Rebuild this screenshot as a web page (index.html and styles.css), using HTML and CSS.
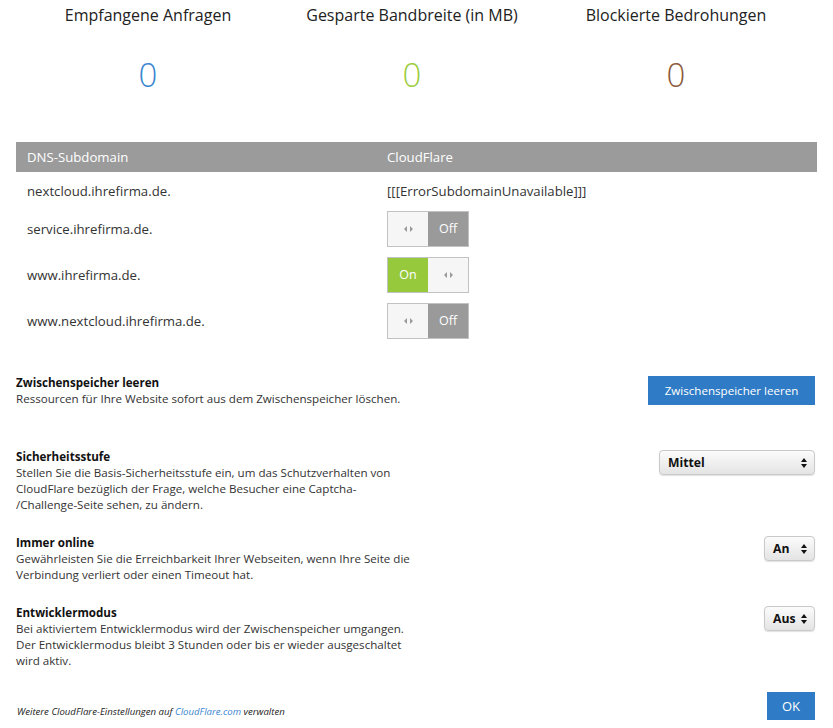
FILE: index.html
```html
<!DOCTYPE html>
<html>
  <head>
  <meta charset="utf-8">
  <title>CloudFlare</title>
  <link rel="stylesheet" href="styles.css">
  </head>
  <body>
    <div class="stats">
      <div class="stat">
        <div class="stat_titel">Empfangene Anfragen</div>
        <div class="stat_wert blau">0</div>
      </div>
      <div class="stat">
        <div class="stat_titel">Gesparte Bandbreite (in MB)</div>
        <div class="stat_wert gruen">0</div>
      </div>
      <div class="stat">
        <div class="stat_titel">Blockierte Bedrohungen</div>
        <div class="stat_wert braun">0</div>
      </div>
    </div>

    <table class="dns">
      <thead>
        <tr><th class="spalte1">DNS-Subdomain</th><th>CloudFlare</th></tr>
      </thead>
      <tbody>
        <tr class="erste">
          <td>nextcloud.ihrefirma.de.</td>
          <td>[[[ErrorSubdomainUnavailable]]]</td>
        </tr>
        <tr>
          <td>service.ihrefirma.de.</td>
          <td>
            <div class="schalter">
              <span class="griff"><svg width="9" height="6" viewBox="0 0 9 6"><path d="M3 0 L0 3 L3 6 Z M6 0 L9 3 L6 6 Z" fill="#9a9a9a"/></svg></span>
              <span class="aus">Off</span>
            </div>
          </td>
        </tr>
        <tr>
          <td>www.ihrefirma.de.</td>
          <td>
            <div class="schalter">
              <span class="an">On</span>
              <span class="griff"><svg width="9" height="6" viewBox="0 0 9 6"><path d="M3 0 L0 3 L3 6 Z M6 0 L9 3 L6 6 Z" fill="#9a9a9a"/></svg></span>
            </div>
          </td>
        </tr>
        <tr>
          <td>www.nextcloud.ihrefirma.de.</td>
          <td>
            <div class="schalter">
              <span class="griff"><svg width="9" height="6" viewBox="0 0 9 6"><path d="M3 0 L0 3 L3 6 Z M6 0 L9 3 L6 6 Z" fill="#9a9a9a"/></svg></span>
              <span class="aus">Off</span>
            </div>
          </td>
        </tr>
      </tbody>
    </table>

    <div class="einstellung" id="cache">
      <div class="text">
        <h3>Zwischenspeicher leeren</h3>
        <p>Ressourcen für Ihre Website sofort aus dem Zwischenspeicher löschen.</p>
      </div>
      <button class="knopf breit">Zwischenspeicher leeren</button>
    </div>

    <div class="einstellung">
      <div class="text">
        <h3>Sicherheitsstufe</h3>
        <p>Stellen Sie die Basis-Sicherheitsstufe ein, um das Schutzverhalten von CloudFlare bezüglich der Frage, welche Besucher eine Captcha-<br>/Challenge-Seite sehen, zu ändern.</p>
      </div>
      <div class="auswahl lang">
        <span>Mittel</span>
        <svg width="6" height="10" viewBox="0 0 6 10"><path d="M3 0 L6 4 L0 4 Z M0 6 L6 6 L3 10 Z" fill="#111"/></svg>
      </div>
    </div>

    <div class="einstellung">
      <div class="text">
        <h3>Immer online</h3>
        <p>Gewährleisten Sie die Erreichbarkeit Ihrer Webseiten, wenn Ihre Seite die Verbindung verliert oder einen Timeout hat.</p>
      </div>
      <div class="auswahl kurz">
        <span>An</span>
        <svg width="6" height="10" viewBox="0 0 6 10"><path d="M3 0 L6 4 L0 4 Z M0 6 L6 6 L3 10 Z" fill="#111"/></svg>
      </div>
    </div>

    <div class="einstellung">
      <div class="text">
        <h3>Entwicklermodus</h3>
        <p>Bei aktiviertem Entwicklermodus wird der Zwischenspeicher umgangen. Der Entwicklermodus bleibt 3 Stunden oder bis er wieder ausgeschaltet wird aktiv.</p>
      </div>
      <div class="auswahl kurz">
        <span>Aus</span>
        <svg width="6" height="10" viewBox="0 0 6 10"><path d="M3 0 L6 4 L0 4 Z M0 6 L6 6 L3 10 Z" fill="#111"/></svg>
      </div>
    </div>

    <div class="fuss">
      <p class="hinweis">Weitere CloudFlare-Einstellungen auf <a href="#">CloudFlare.com</a> verwalten</p>
      <button class="knopf ok">OK</button>
    </div>
  </body>
</html>
```

FILE: styles.css
```css
body {
  margin: 0;
  padding: 0 16px;
  font-family: "Open Sans", "Liberation Sans", sans-serif;
  color: #333;
  background-color: white;
}

/* Statistik oben */
.stats {
  display: grid;
  grid-template-columns: 264px 264px 264px;
  padding-top: 4px;
}
.stat { text-align: center; }
.stat_titel {
  font-size: 16px;
  line-height: 22px;
  color: #222;
}
.stat_wert {
  margin-top: 29px;
  font-size: 33px;
  font-weight: 300;
  line-height: 40px;
}
.blau { color: #3a85cf; }
.gruen { color: #9ccd3c; }
.braun { color: #8c5a3a; }

/* DNS Tabelle */
.dns {
  width: 801px;
  margin-top: 47px;
  border-collapse: collapse;
  font-size: 13.2px;
}
.dns th {
  height: 30px;
  padding: 0 11px;
  background-color: #9b9b9b;
  color: white;
  font-weight: normal;
  text-align: left;
}
.dns th.spalte1 { width: 338px; }
.dns td {
  padding: 5px 11px;
  height: 36px;
  line-height: 20px;
}
.dns tr.erste td {
  height: 20px;
  padding: 9px 11px 5px 11px;
}

.schalter {
  display: flex;
  width: 80px;
  height: 34px;
  border: 1px solid #c2c2c2;
}
.schalter span {
  flex: 1;
  display: flex;
  align-items: center;
  justify-content: center;
  font-size: 12.5px;
  color: white;
}
.schalter .griff { background-color: #f6f6f6; }
.schalter .aus { background-color: #9a9a9a; }
.schalter .an { background-color: #97c93d; }

/* Einstellungen */
.einstellung {
  display: flex;
  justify-content: space-between;
  align-items: flex-start;
  margin-top: 22px;
  margin-right: 2px;
  font-size: 11.6px;
  line-height: 16px;
}
#cache { margin-top: 31px; margin-bottom: 42px; }
#cache + .einstellung { margin-top: 0; }
.einstellung .text { width: 410px; }
.einstellung h3 {
  margin: 0;
  font-size: 11.6px;
  font-weight: bold;
  color: #111;
}
.einstellung p { margin: 0; }

.knopf {
  border: none;
  background-color: #2f7bc5;
  color: white;
  font-family: "Open Sans", "Liberation Sans", sans-serif;
  font-size: 11.6px;
  cursor: pointer;
}
.knopf.breit {
  width: 167px;
  height: 29px;
  margin-top: 1px;
}
.knopf.ok {
  width: 48px;
  height: 28px;
  font-size: 13px;
}

.auswahl {
  display: flex;
  align-items: center;
  justify-content: space-between;
  box-sizing: border-box;
  height: 25px;
  padding: 0 7px 0 8px;
  margin-top: 1px;
  border: 1px solid #c9c9c9;
  border-radius: 4px;
  background: linear-gradient(#fbfbfb, #e4e4e4);
  box-shadow: 0 1px 1px rgba(0, 0, 0, 0.12);
  font-size: 12.2px;
  font-weight: bold;
  color: #111;
}
.auswahl.lang { width: 156px; }
.auswahl.kurz { width: 51px; }

/* Fusszeile */
.fuss {
  display: flex;
  justify-content: space-between;
  align-items: flex-end;
  margin-top: 23px;
  margin-right: 2px;
}
.hinweis {
  margin: 0 0 2px 1px;
  font-size: 9.6px;
  font-style: italic;
  color: #222;
}
.hinweis a {
  color: #3a85cf;
  text-decoration: none;
}
```
